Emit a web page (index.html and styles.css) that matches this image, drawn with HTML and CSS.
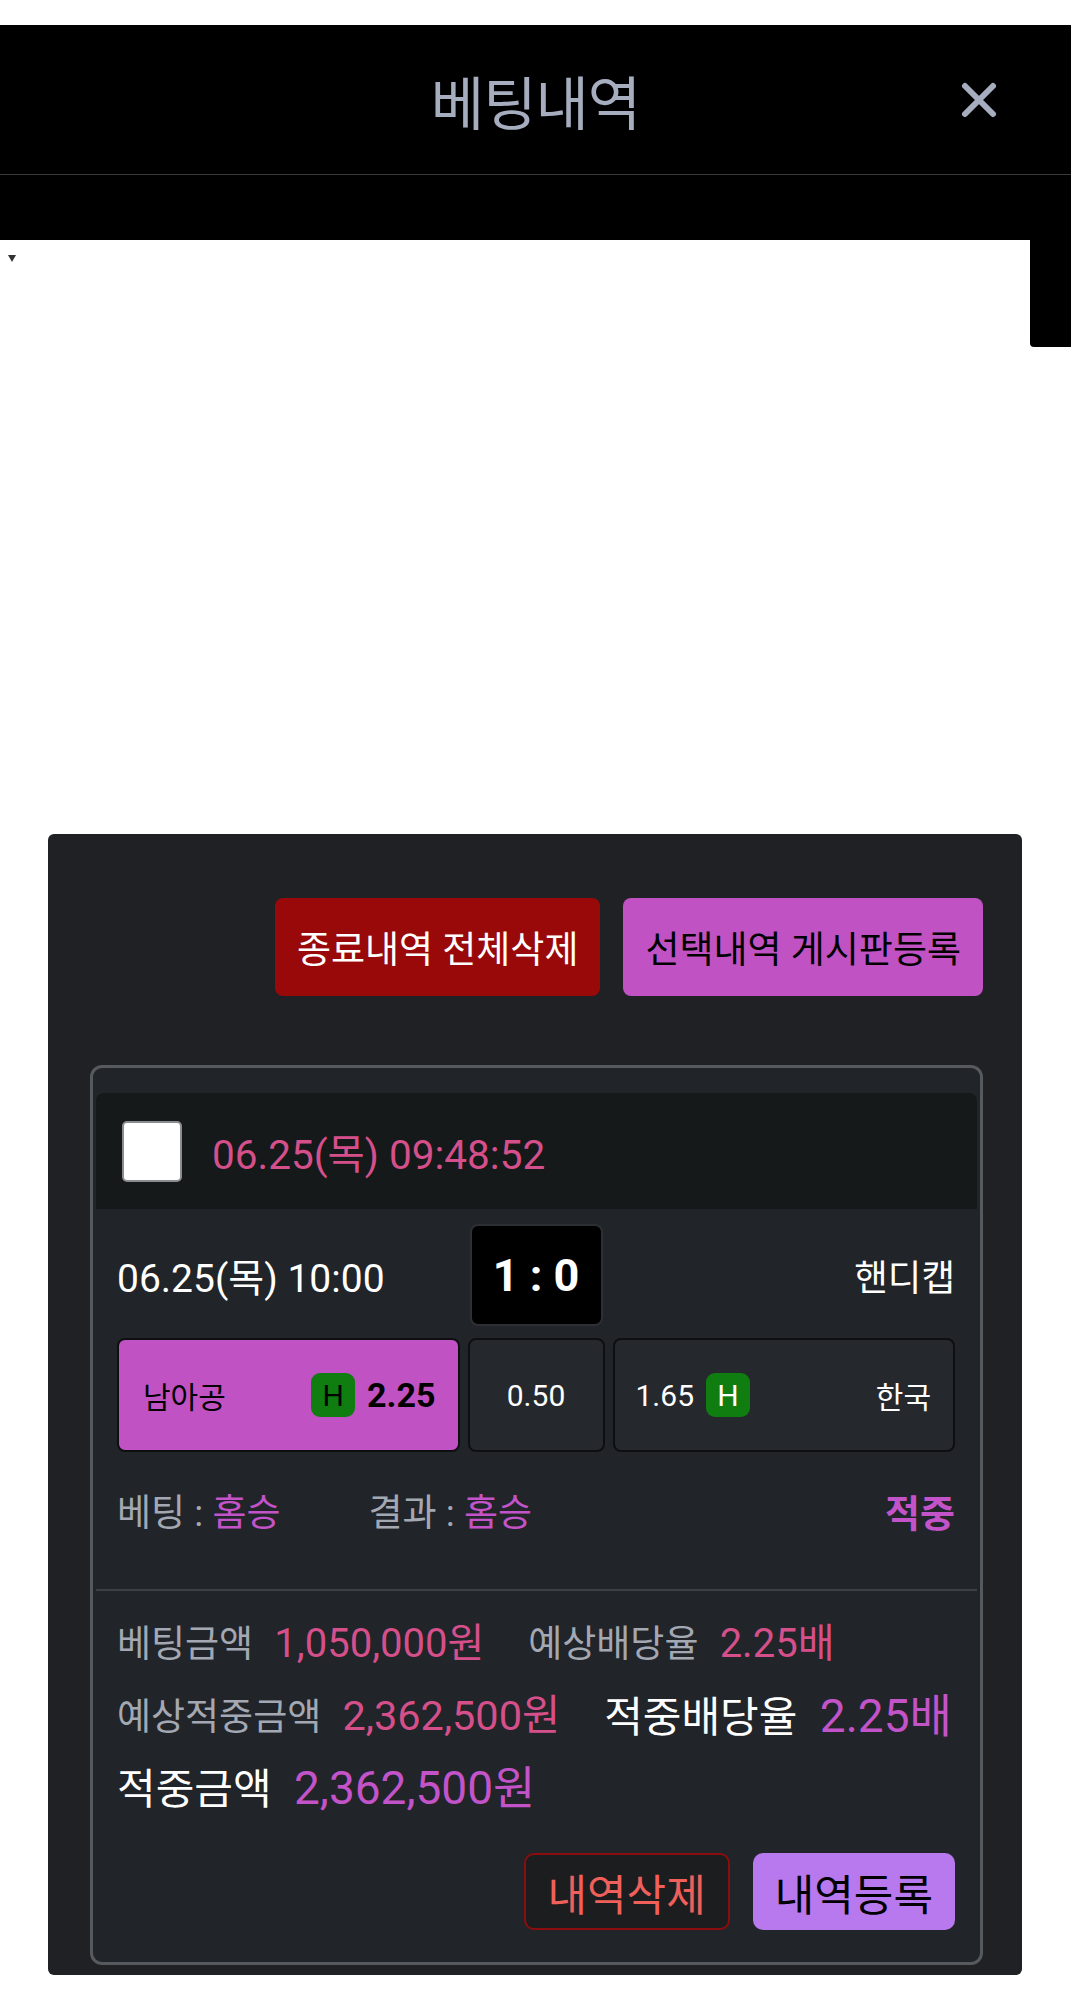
FILE: index.html
```html
<!DOCTYPE html>
<html lang="ko">

<head>
    <meta charset="UTF-8">
    <meta name="viewport" content="width=device-width, initial-scale=1.0">
    <title>베팅내역</title>
    <link rel="stylesheet" href="styles.css">
</head>

<body>
    <div class="modal">
        <header class="modal-head">
            <span></span>
            <h1 class="modal-title">베팅내역</h1>
            <button class="modal-close" type="button">
                <svg width="38" height="38" viewBox="0 0 38 38">
                    <path d="M5 5 L33 33 M33 5 L5 33" stroke="#a6adbf" stroke-width="6" stroke-linecap="round" fill="none" />
                </svg>
            </button>
        </header>
        <div class="head-strip"></div>
        <div class="gap-row">
            <div class="gap-fill"><span class="caret"></span></div>
            <div class="gap-side"></div>
        </div>

        <main class="panel">
            <div class="panel-actions">
                <button class="btn btn-danger" type="button">종료내역 전체삭제</button>
                <button class="btn btn-accent" type="button">선택내역 게시판등록</button>
            </div>

            <section class="bet-card">
                <div class="bet-head">
                    <span class="check"></span>
                    <span class="bet-time">06.25(목) 09:48:52</span>
                </div>

                <div class="bet-match">
                    <div class="match-row">
                        <span class="match-date">06.25(목) 10:00</span>
                        <span class="score">1 : 0</span>
                        <span class="match-type">핸디캡</span>
                    </div>
                    <div class="odds-row">
                        <div class="odd odd-home picked">
                            <span class="team">남아공</span>
                            <span class="badge">H</span>
                            <span class="rate">2.25</span>
                        </div>
                        <div class="odd odd-mid">0.50</div>
                        <div class="odd odd-away">
                            <span class="rate">1.65</span>
                            <span class="badge">H</span>
                            <span class="team">한국</span>
                        </div>
                    </div>
                    <div class="result-row">
                        <span class="result-item">베팅 : <em>홈승</em></span>
                        <span class="result-item">결과 : <em>홈승</em></span>
                        <span class="result-hit">적중</span>
                    </div>
                </div>

                <div class="bet-summary">
                    <div class="sum-row">
                        <span class="sum-item">베팅금액 <b class="pink">1,050,000원</b></span>
                        <span class="sum-item">예상배당율 <b class="pink">2.25배</b></span>
                    </div>
                    <div class="sum-row">
                        <span class="sum-item">예상적중금액 <b class="pink lg">2,362,500원</b></span>
                        <span class="sum-item big">적중배당율 <b class="violet">2.25배</b></span>
                    </div>
                    <div class="sum-row">
                        <span class="sum-item big">적중금액 <b class="violet">2,362,500원</b></span>
                    </div>
                    <div class="card-actions">
                        <button class="btn-sm btn-outline" type="button">내역삭제</button>
                        <button class="btn-sm btn-lilac" type="button">내역등록</button>
                    </div>
                </div>
            </section>
        </main>
    </div>
</body>

</html>
```

FILE: styles.css
```css
body {
    margin: 0;
    background-color: #fff;
    font-family: Roboto, "Noto Sans CJK KR", sans-serif;
    color: #fff;
}

button {
    font-family: inherit;
    cursor: pointer;
}

.modal {
    margin-top: 25px;
}

.modal-head {
    display: grid;
    grid-template-columns: 1fr auto 1fr;
    align-items: center;
    height: 149px;
    background-color: #000;
    border-bottom: 1px solid #3a3a3a;
}

.modal-title {
    margin: 0;
    font-size: 58px;
    font-weight: 400;
    color: #a6adbf;
    letter-spacing: -1px;
}

.modal-close {
    justify-self: end;
    margin-right: 73px;
    padding: 0;
    border: none;
    background: none;
    display: flex;
}

.head-strip {
    height: 65px;
    background-color: #000;
}

.gap-row {
    display: flex;
    height: 107px;
}

.gap-fill {
    flex: 1;
    padding: 15px 0 0 8px;
}

.caret {
    display: block;
    width: 0;
    height: 0;
    border-left: 4px solid transparent;
    border-right: 4px solid transparent;
    border-top: 7px solid #333;
}

.gap-side {
    width: 41px;
    background-color: #000;
    border-bottom-left-radius: 4px;
}

/* main panel */
.panel {
    margin: 487px 49px 0 48px;
    padding: 64px 39px 10px 42px;
    background-color: #1f2124;
    border-radius: 6px;
}

.panel-actions {
    display: flex;
    justify-content: flex-end;
    gap: 23px;
    margin-bottom: 69px;
}

.btn {
    height: 98px;
    padding: 0 22px;
    border: none;
    border-radius: 8px;
    font-size: 37px;
}

.btn-danger {
    background-color: #990909;
    color: #fff;
}

.btn-accent {
    background-color: #c052c4;
    color: #000;
}

.bet-card {
    padding: 25px 3px 32px;
    background-color: #212428;
    border: 3px solid #56595d;
    border-radius: 12px;
}

.bet-head {
    display: flex;
    align-items: center;
    gap: 30px;
    height: 116px;
    padding-left: 26px;
    background-color: #16191a;
    border-radius: 8px 8px 0 0;
}

.check {
    width: 56px;
    height: 57px;
    background-color: #fff;
    border: 2px solid #8a8d90;
    border-radius: 5px;
}

.bet-time {
    font-size: 40.5px;
    color: #d5508b;
}

.bet-match {
    padding: 15px 22px 55px 21px;
}

.match-row,
.odds-row {
    display: grid;
    grid-template-columns: 1fr 137px 1fr;
    gap: 8px;
    align-items: center;
}

.match-date {
    font-size: 39px;
}

.score {
    justify-self: center;
    display: flex;
    align-items: center;
    justify-content: center;
    width: 129px;
    height: 98px;
    background-color: #000;
    border: 2px solid #2c2f33;
    border-radius: 8px;
    font-size: 45px;
    font-weight: 700;
}

.match-type {
    justify-self: end;
    font-size: 36.5px;
}

.odds-row {
    margin-top: 12px;
}

.odd {
    display: flex;
    align-items: center;
    height: 110px;
    border: 2px solid #0e0f10;
    border-radius: 8px;
    background-color: #25292d;
    font-size: 30px;
}

.odd-home {
    padding: 0 22px 0 24px;
}

.odd-away {
    padding: 0 22px 0 21px;
}

.odd .team {
    flex: 1;
}

.odd-away .team {
    text-align: right;
}

.odd.picked {
    background-color: #c052c4;
    color: #000;
}

.odd-home .rate {
    margin-left: 12px;
    font-size: 34px;
    font-weight: 700;
}

.odd-away .badge {
    margin-left: 12px;
}

.odd-mid {
    justify-content: center;
}

.badge {
    display: flex;
    align-items: center;
    justify-content: center;
    width: 44px;
    height: 44px;
    border-radius: 9px;
    background-color: #0f7d0f;
    font-size: 30px;
    color: #fff;
}

.picked .badge {
    color: #000;
}

.result-row {
    display: flex;
    align-items: center;
    gap: 88px;
    margin-top: 42px;
    font-size: 37px;
    line-height: 40px;
    color: #a3a8b3;
}

.result-item em {
    font-style: normal;
    color: #c353c9;
}

.result-hit {
    margin-left: auto;
    font-size: 38px;
    font-weight: 700;
    color: #c353c9;
}

.bet-summary {
    padding: 21px 22px 0 21px;
    border-top: 2px solid #3d4044;
}

.sum-row {
    display: flex;
    align-items: center;
    gap: 44px;
    height: 56px;
    margin-bottom: 16px;
    font-size: 37px;
    color: #a3a8b3;
}

.sum-item b {
    margin-left: 12px;
    font-size: 40px;
    font-weight: 400;
}

.sum-item b.lg {
    font-size: 41.5px;
}

.sum-item.big {
    font-size: 42px;
    color: #fff;
}

.sum-item.big b {
    font-size: 46px;
}

.pink {
    color: #d5508b;
}

.violet {
    color: #c353c9;
}

.card-actions {
    display: flex;
    justify-content: flex-end;
    gap: 23px;
    margin-top: 41px;
}

.btn-sm {
    height: 77px;
    padding: 0 22px;
    border-radius: 10px;
    font-size: 43px;
}

.btn-outline {
    background-color: #1c1d1f;
    border: 2px solid #8b0d0d;
    color: #f0605a;
}

.btn-lilac {
    background-color: #b878ee;
    border: none;
    color: #000;
}
```
